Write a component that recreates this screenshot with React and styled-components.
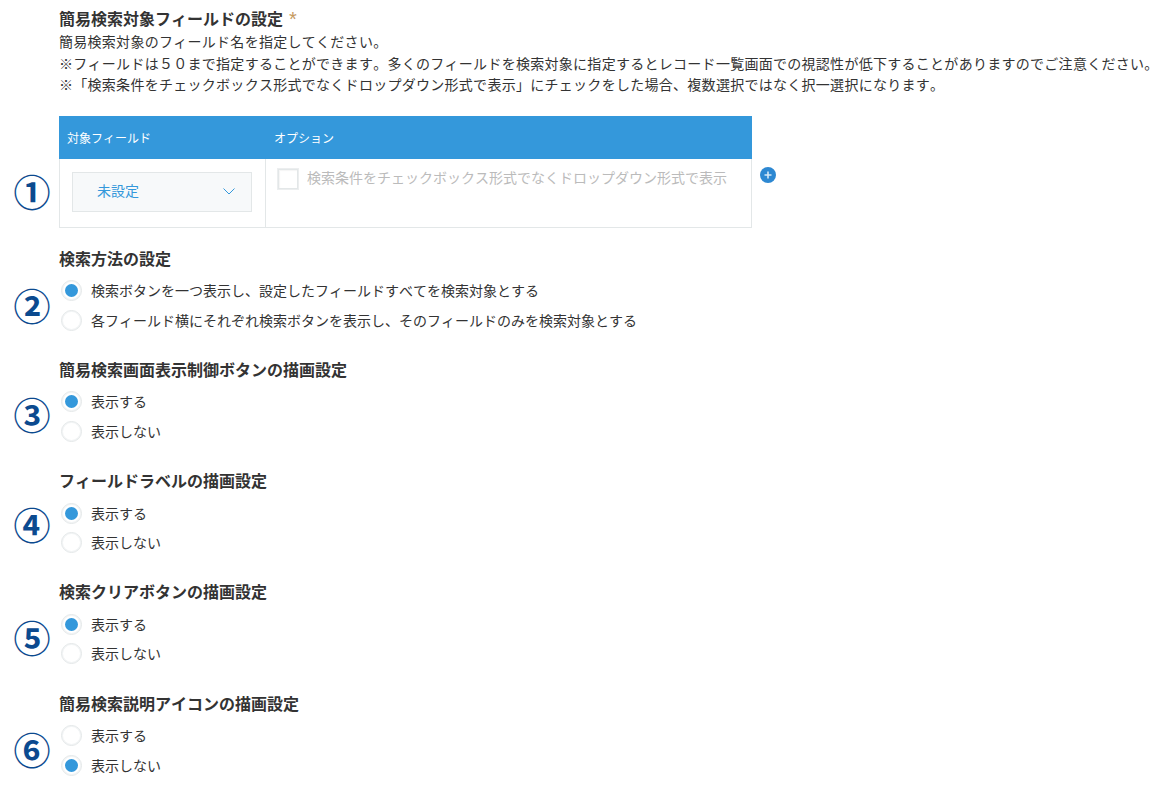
import React from 'react'
import styled, { createGlobalStyle } from 'styled-components'

const GlobalStyle = createGlobalStyle`
  html, body {
    margin: 0;
    padding: 0;
    background: #fff;
    overflow: hidden;
  }
  body {
    font-family: "Noto Sans CJK JP", "Noto Sans", sans-serif;
    font-size: 14px;
    font-kerning: none;
    color: #333;
  }
`

const Page = styled.div`
  width: 1168px;
  height: 792px;
  box-sizing: border-box;
  padding: 8px 0 0 59px;
  overflow: hidden;
`

const Section = styled.section`
  position: relative;
  margin-bottom: ${p => p.$gap || 24}px;
`

const Title = styled.h3`
  margin: 0;
  height: 22px;
  font-size: 16px;
  line-height: 21px;
  font-weight: 700;
  color: #333;
  white-space: nowrap;
`

const Required = styled.span`
  display: inline-block;
  height: 16px;
  margin-left: 6px;
  color: #c59a5f;
  font-family: "Liberation Sans", sans-serif;
  font-size: 20px;
  line-height: 22px;
  font-weight: 400;
  vertical-align: top;
`

const Desc = styled.p`
  margin: 1px 0 20px;
  font-size: 14px;
  letter-spacing: 0.28px;
  line-height: 21.5px;
  color: #333;
  white-space: nowrap;
`

const Marker = styled.span`
  position: absolute;
  left: -46px;
  top: ${p => p.$top}px;
  width: 38px;
  height: 40px;
  line-height: 40px;
  text-align: center;
  font-size: 37px;
  font-weight: 700;
  color: #0b4a8f;
`

const Table = styled.div`
  display: grid;
  grid-template-columns: 206px 487px;
  width: 693px;
`

const HeadCell = styled.div`
  height: 43px;
  padding-left: ${p => p.$pad}px;
  background: #3498db;
  color: #fff;
  font-size: 12px;
  line-height: 43px;
`

const BodyCell = styled.div`
  box-sizing: border-box;
  height: 69px;
  padding: ${p => p.$padding};
  border-bottom: 1px solid #e3e7e8;
  border-left: 1px solid #e3e7e8;
  border-right: ${p => (p.$last ? '1px solid #e3e7e8' : 'none')};
  display: flex;
  align-items: flex-start;
`

const Select = styled.div`
  box-sizing: border-box;
  width: 180px;
  height: 40px;
  padding: 0 16px 3px 24px;
  background: #f7f9fa;
  border: 1px solid #e3e7e8;
  color: #3498db;
  display: flex;
  align-items: center;
  justify-content: space-between;
`

const Chevron = styled.svg`
  width: 12px;
  height: 7px;
  margin-top: 3px;
`

const CheckBox = styled.span`
  box-sizing: border-box;
  flex: none;
  width: 20px;
  height: 20px;
  margin-right: 9px;
  background: #fff;
  border: 1px solid #e3e7e8;
  box-shadow: 0 0 0 1px #eceeef, inset 1px 1px 1px rgba(0, 0, 0, 0.04);
`

const DisabledLabel = styled.span`
  color: #bbb;
  line-height: 17px;
  white-space: nowrap;
`

const TableWrap = styled.div`
  position: relative;
  width: 693px;
`

const AddButton = styled.svg`
  position: absolute;
  left: 701px;
  top: 51px;
  width: 16px;
  height: 16px;
`

const RadioList = styled.div`
  margin-top: 6.25px;
`

const RadioRow = styled.div`
  height: 29.5px;
  display: flex;
  align-items: center;
  padding-left: 2px;
  white-space: nowrap;
`

const RadioLabel = styled.span`
  margin-bottom: 1px;
`

const RadioCircle = styled.span`
  box-sizing: border-box;
  flex: none;
  width: 21px;
  height: 21px;
  margin-right: 9px;
  border-radius: 50%;
  background: #fff;
  border: 1px solid #e3e7e8;
  box-shadow: inset 0 0 0 1px #f2f4f5;
  display: flex;
  align-items: center;
  justify-content: center;

  &::after {
    content: '';
    display: ${p => (p.$checked ? 'block' : 'none')};
    width: 13px;
    height: 13px;
    border-radius: 50%;
    background: #3498db;
  }
`

function Radio({ checked, children }) {
  return (
    <RadioRow>
      <RadioCircle $checked={checked} />
      <RadioLabel>{children}</RadioLabel>
    </RadioRow>
  )
}

const SHOW = '表示する'
const HIDE = '表示しない'

const sections = [
  {
    mark: '②',
    title: '検索方法の設定',
    top: 37,
    checked: 0,
    options: [
      '検索ボタンを一つ表示し、設定したフィールドすべてを検索対象とする',
      '各フィールド横にそれぞれ検索ボタンを表示し、そのフィールドのみを検索対象とする',
    ],
  },
  { mark: '③', title: '簡易検索画面表示制御ボタンの描画設定', top: 35, checked: 0, options: [SHOW, HIDE] },
  { mark: '④', title: 'フィールドラベルの描画設定', top: 34, checked: 0, options: [SHOW, HIDE] },
  { mark: '⑤', title: '検索クリアボタンの描画設定', top: 36, checked: 0, options: [SHOW, HIDE] },
  { mark: '⑥', title: '簡易検索説明アイコンの描画設定', top: 36, checked: 1, options: [SHOW, HIDE] },
]

export default function App() {
  return (
    <Page>
      <GlobalStyle />
      <Section $gap={20}>
        <Title>
          簡易検索対象フィールドの設定<Required>*</Required>
        </Title>
        <Marker $top={163}>①</Marker>
        <Desc>
          簡易検索対象のフィールド名を指定してください。
          <br />
          ※フィールドは５０まで指定することができます。多くのフィールドを検索対象に指定するとレコード一覧画面での視認性が低下することがありますのでご注意ください。
          <br />
          ※「検索条件をチェックボックス形式でなくドロップダウン形式で表示」にチェックをした場合、複数選択ではなく択一選択になります。
        </Desc>
        <TableWrap>
          <Table>
            <HeadCell $pad={8}>対象フィールド</HeadCell>
            <HeadCell $pad={9}>オプション</HeadCell>
            <BodyCell $padding="13px 0 0 12px">
              <Select>
                未設定
                <Chevron viewBox="0 0 12 7" fill="none">
                  <path d="M.5.5L6 6l5.5-5.5" stroke="#3498db" strokeWidth="1" />
                </Chevron>
              </Select>
            </BodyCell>
            <BodyCell $padding="10px 0 0 12px" $last>
              <CheckBox />
              <DisabledLabel>検索条件をチェックボックス形式でなくドロップダウン形式で表示</DisabledLabel>
            </BodyCell>
          </Table>
          <AddButton viewBox="0 0 16 16">
            <circle cx="8" cy="8" r="8" fill="#2d88d2" />
            <path d="M8 4.5v7M4.5 8h7" stroke="#d4e8f7" strokeWidth="1.6" />
          </AddButton>
        </TableWrap>
      </Section>
      {sections.map(s => (
        <Section key={s.mark}>
          <Title>{s.title}</Title>
          <Marker $top={s.top}>{s.mark}</Marker>
          <RadioList>
            {s.options.map((o, i) => (
              <Radio key={o} checked={i === s.checked}>
                {o}
              </Radio>
            ))}
          </RadioList>
        </Section>
      ))}
    </Page>
  )
}
